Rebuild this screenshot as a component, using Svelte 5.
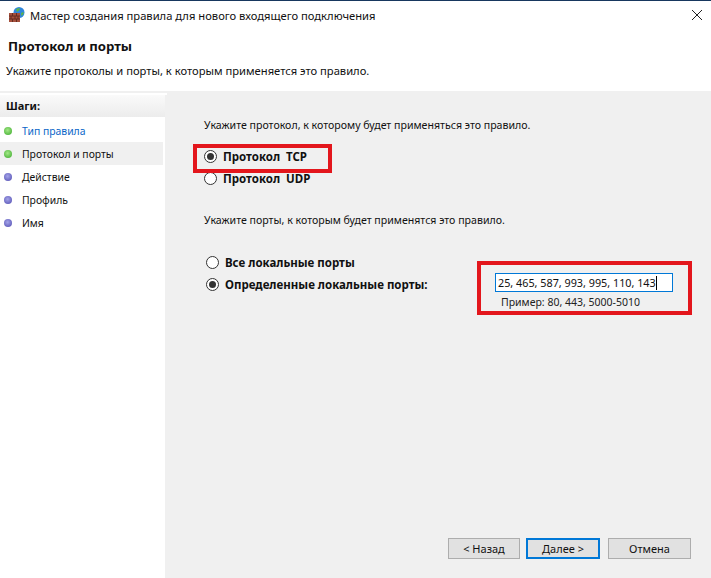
<script>
  const steps = [
    { label: "Тип правила", done: true, link: true },
    { label: "Протокол и порты", done: true, current: true },
    { label: "Действие" },
    { label: "Профиль" },
    { label: "Имя" },
  ];
</script>

<div class="window">
  <div class="titlebar">
    <svg class="app-icon" width="16" height="16" viewBox="0 0 16 16">
      <circle cx="10" cy="5.5" r="5.5" fill="#2f86dc" />
      <path d="M7 2.5c1-1 3-1.500 4-1l-1 2-2 1.500zM12 6l2.500-1v2l-2 2z" fill="#5cb548" />
      <rect x="0" y="6" width="11" height="9" fill="#a5503c" />
      <path d="M0 9h11M0 12h11M3.500 6v3M7.500 6v3M2 9v3M6 9v3M9 9v3M3.500 12v3M7.500 12v3" stroke="#642c20" stroke-width="1" fill="none" />
    </svg>
    <span class="title">Мастер создания правила для нового входящего подключения</span>
    <svg class="close" width="10" height="10" viewBox="0 0 10 10">
      <path d="M0 0l10 10M10 0l-10 10" stroke="#222" stroke-width="1" fill="none" />
    </svg>
  </div>

  <header class="head">
    <h1>Протокол и порты</h1>
    <p>Укажите протоколы и порты, к которым применяется это правило.</p>
  </header>

  <div class="body">
    <aside class="steps">
      <div class="steps-head">Шаги:</div>
      <ul>
        {#each steps as step}
          <li class:current={step.current} class:link={step.link}>
            <span class="dot" class:done={step.done}></span>
            {step.label}
          </li>
        {/each}
      </ul>
    </aside>

    <main class="content">
      <p class="prompt first">Укажите протокол, к которому будет применяться это правило.</p>
      <div class="radio-group protocols">
        <label class="radio"><input type="radio" name="proto" checked /><span>Протокол&nbsp; TCP</span></label>
        <label class="radio"><input type="radio" name="proto" /><span>Протокол&nbsp; UDP</span></label>
        <div class="mark tcp-mark"></div>
      </div>

      <p class="prompt second">Укажите порты, к которым будет применятся это правило.</p>

      <div class="ports">
        <div class="radio-group">
          <label class="radio"><input type="radio" name="ports" /><span>Все локальные порты</span></label>
          <label class="radio"><input type="radio" name="ports" checked /><span>Определенные локальные порты:</span></label>
        </div>
        <div class="port-field">
          <div class="port-input">25, 465, 587, 993, 995, 110, 143<i class="caret"></i></div>
          <div class="hint">Пример: 80, 443, 5000-5010</div>
          <div class="mark port-mark"></div>
        </div>
      </div>

      <div class="spacer"></div>

      <div class="buttons">
        <button type="button" class="back">&lt; Назад</button>
        <button type="button" class="default">Далее &gt;</button>
        <button type="button" class="cancel">Отмена</button>
      </div>
    </main>
  </div>
</div>

<style>
  :global(body) {
    margin: 0;
    background: #fff;
  }

  .window {
    width: 711px;
    height: 578px;
    display: flex;
    flex-direction: column;
    overflow: hidden;
    font-family: "Noto Sans", "Open Sans", sans-serif;
    font-size: 11.2px;
    color: #111;
    background: #fff;
    border-top: 1px solid #17375e;
    box-sizing: border-box;
  }

  .titlebar {
    height: 29px;
    display: flex;
    align-items: center;
    padding: 0 9px 0 9px;
    flex: none;
  }

  .app-icon {
    margin: -2px 5px 0 0;
    flex: none;
  }

  .close {
    margin-top: -1px;
  }

  .title {
    flex: 1;
  }

  .head {
    height: 61px;
    flex: none;
    border-bottom: 2px solid #f0f0f0;
    padding-left: 8px;
  }

  h1 {
    margin: 7px 0 0;
    font-size: 13.2px;
    font-weight: 700;
    line-height: 18px;
  }

  .head p {
    margin: 8px 0 0 -2px;
    line-height: 16px;
  }

  .body {
    flex: 1;
    display: flex;
    min-height: 0;
  }

  .steps {
    width: 165px;
    flex: none;
    border-right: 2px solid #f0f0f0;
    margin-top: 2px;
  }

  .steps-head {
    height: 22px;
    line-height: 21px;
    padding-left: 6px;
    font-weight: 700;
    font-size: 11px;
    background: linear-gradient(#fafafa, #ececec);
  }

  ul {
    list-style: none;
    margin: 2px 0 0;
    padding: 0;
  }

  li {
    height: 23px;
    display: flex;
    align-items: center;
    padding-left: 4px;
    margin-right: 2px;
    font-size: 10.4px;
  }

  li.current {
    background: #f0f0f0;
  }

  li.link {
    color: #0a66c8;
  }

  .dot {
    width: 8px;
    height: 8px;
    border-radius: 50%;
    margin-right: 10px;
    background: radial-gradient(circle at 45% 40%, #a4a4e8, #4f4ab0);
  }

  .dot.done {
    background: radial-gradient(circle at 45% 40%, #a4e888, #38a828);
  }

  .content {
    flex: 1;
    background: #f0f0f0;
    padding: 0 20px 19px 37px;
    display: flex;
    flex-direction: column;
    min-width: 0;
  }

  .prompt {
    margin: 0;
    font-size: 10.6px;
    line-height: 16px;
  }

  .first {
    margin-top: 24px;
  }

  .protocols {
    position: relative;
    margin-top: 13px;
  }

  .radio-group {
    display: flex;
    flex-direction: column;
    gap: 2px;
  }

  .radio {
    height: 20px;
    display: flex;
    align-items: center;
    font-weight: 700;
    font-size: 11.5px;
    gap: 6px;
  }

  input[type="radio"] {
    margin: 0;
    width: 13px;
    height: 13px;
    appearance: none;
    border: 1px solid #333;
    border-radius: 50%;
    background: #fff;
    display: grid;
    place-content: center;
  }

  input[type="radio"]:checked::before {
    content: "";
    width: 7px;
    height: 7px;
    border-radius: 50%;
    background: #333;
  }

  .mark {
    position: absolute;
    border: 4px solid #e3161c;
    box-sizing: border-box;
    pointer-events: none;
  }

  .tcp-mark {
    left: -11px;
    top: -2px;
    width: 139px;
    height: 29px;
  }

  .second {
    margin-top: 24px;
  }

  .ports {
    display: flex;
    justify-content: space-between;
    margin-top: 24px;
    margin-left: 2px;
  }

  .port-field {
    position: relative;
    margin-right: 18px;
    margin-top: 21px;
  }

  .port-input {
    width: 174px;
    height: 17px;
    line-height: 17px;
    border: 1px solid #0078d7;
    background: #fff;
    padding-left: 2px;
    font-size: 10.8px;
    white-space: nowrap;
  }

  .caret {
    display: inline-block;
    width: 1px;
    height: 14px;
    background: #000;
    vertical-align: -3px;
  }

  .hint {
    margin: 2px 0 0 6px;
    font-size: 10.5px;
    line-height: 16px;
    color: #222;
  }

  .port-mark {
    left: -18px;
    top: -12px;
    width: 215px;
    height: 54px;
  }

  .spacer {
    flex: 1;
  }

  .buttons {
    display: flex;
    justify-content: flex-end;
  }

  button {
    height: 21px;
    padding: 0;
    border: 1px solid #adadad;
    background: #e1e1e1;
    font: inherit;
    font-size: 11px;
    color: #111;
  }

  .back {
    width: 72px;
  }

  .default {
    width: 74px;
    margin-left: 6px;
    border: 2px solid #0078d7;
  }

  .cancel {
    width: 83px;
    margin-left: 8px;
  }
</style>
